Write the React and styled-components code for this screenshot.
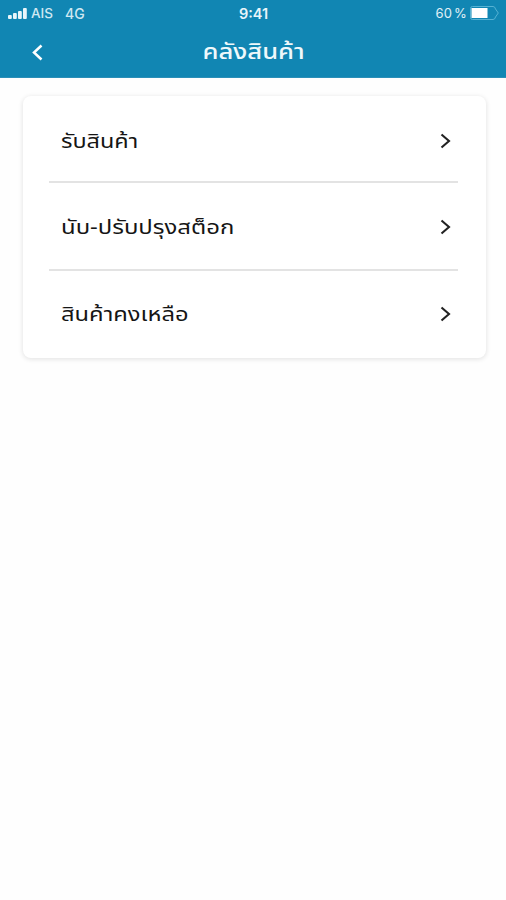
import React from "react";
import styled, { createGlobalStyle } from "styled-components";

const menu = [
  { label: "รับสินค้า", height: 85, offset: 5, stretch: 1.17 },
  { label: "นับ-ปรับปรุงสต็อก", height: 88, offset: 2, stretch: 1.195 },
  { label: "สินค้าคงเหลือ", height: 87, offset: 0, stretch: 1.185 },
];

function App() {
  return (
    <Screen>
      <GlobalStyle />
      <Header>
        <StatusBar>
          <Carrier>
            <Signal viewBox="0 0 19 11">
              <rect x="0" y="7" width="3.8" height="4" rx="1" />
              <rect x="5" y="5" width="3.8" height="6" rx="1" />
              <rect x="10" y="3" width="3.8" height="8" rx="1" />
              <rect x="15" y="0" width="3.8" height="11" rx="1" />
            </Signal>
            <span>AIS</span>
            <Network>4G</Network>
          </Carrier>
          <Clock>9:41</Clock>
          <Power>
            <Percent>60 %</Percent>
            <Battery viewBox="0 0 29 14">
              <path
                d="M2.5 0.5H23Q25 0.5 25.5 3L28.3 7L25.5 11Q25 13.5 23 13.5H2.5Q0.5 13.5 0.5 11.5V2.5Q0.5 0.5 2.5 0.5Z"
                fill="none"
                stroke="#56b2d3"
              />
              <rect x="1.5" y="2" width="16" height="10" fill="#fff" />
            </Battery>
          </Power>
        </StatusBar>
        <NavBar>
          <BackButton>
            <svg width="12" height="17" viewBox="0 0 12 17">
              <path d="M10.5 1.5L3 8.5L10.5 15.5" />
            </svg>
          </BackButton>
          <Title>คลังสินค้า</Title>
        </NavBar>
      </Header>
      <Card>
        {menu.map((item) => (
          <MenuRow key={item.label} $height={item.height} $offset={item.offset}>
            <Label $stretch={item.stretch}>{item.label}</Label>
            <Arrow width="12" height="16" viewBox="0 0 12 16">
              <path d="M1.5 1.5L9 8L1.5 14.5" />
            </Arrow>
          </MenuRow>
        ))}
      </Card>
    </Screen>
  );
}

export default App;

const GlobalStyle = createGlobalStyle`
  * {
    box-sizing: border-box;
  }

  body {
    margin: 0;
    background: #fefefe;
  }
`;

const Screen = styled.div`
  min-height: 900px;
  font-family: "Noto Sans Thai", "Noto Sans", sans-serif;
`;

const Header = styled.div`
  height: 78px;
  background: #1186b3;
  border-bottom: 1px solid #2b8fb8;
  color: #fff;
`;

const StatusBar = styled.div`
  display: grid;
  grid-template-columns: 1fr auto 1fr;
  align-items: center;
  height: 26px;
  padding: 0 7px 0 8px;
  font-family: Inter, sans-serif;
  font-size: 13.5px;
`;

const Carrier = styled.div`
  display: flex;
  align-items: center;
  font-weight: 500;
  color: #cfe8f2;
`;

const Signal = styled.svg`
  width: 19px;
  height: 11px;
  margin-right: 4px;
  fill: #e8f5fa;
`;

const Network = styled.span`
  margin-left: 12px;
  font-size: 14px;
`;

const Clock = styled.div`
  font-size: 14.5px;
  font-weight: 600;
  color: #e8f5fa;
`;

const Power = styled.div`
  display: flex;
  align-items: center;
  justify-content: flex-end;
  gap: 3px;
  color: #e0f1f7;
`;

const Percent = styled.span`
  font-size: 13px;
  letter-spacing: 0.2px;
  word-spacing: -2px;
`;

const Battery = styled.svg`
  width: 29px;
  height: 14px;
`;

const NavBar = styled.div`
  display: grid;
  grid-template-columns: 60px 1fr 60px;
  align-items: center;
  height: 52px;
`;

const BackButton = styled.div`
  display: flex;
  padding-left: 31px;

  path {
    fill: none;
    stroke: #fff;
    stroke-width: 2.5;
  }
`;

const Title = styled.div`
  padding: 2px 0 0 1px;
  font-size: 21.5px;
  font-weight: 500;
  line-height: 50px;
  text-align: center;
  color: #eef8fb;
  transform: scaleX(1.19);
`;

const Card = styled.div`
  margin: 18px 20px 0 23px;
  height: 262px;
  padding: 0 28px 0 26px;
  border-radius: 8px;
  background: #fff;
  box-shadow: 0 1px 4px 1px rgba(0, 0, 0, 0.09);
`;

const MenuRow = styled.div`
  display: flex;
  align-items: center;
  justify-content: space-between;
  height: ${(props) => props.$height}px;
  padding: ${(props) => props.$offset}px 6px 0 12px;

  & + & {
    border-top: 2px solid #e3e3e3;
  }
`;

const Label = styled.span`
  padding-top: 2px;
  font-size: 20px;
  white-space: nowrap;
  color: #151515;
  transform: scaleX(${(props) => props.$stretch});
  transform-origin: left;
`;

const Arrow = styled.svg`
  path {
    fill: none;
    stroke: #222;
    stroke-width: 2.1;
  }
`;
